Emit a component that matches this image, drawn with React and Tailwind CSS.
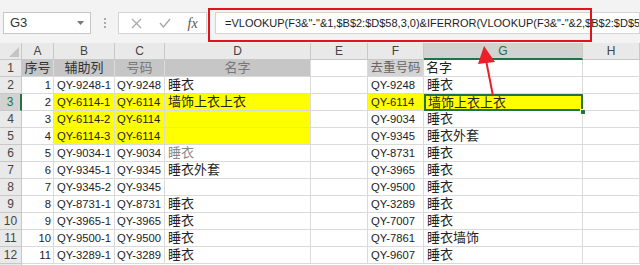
import React from "react";

const cols = [
  { key: "A", w: "w-[32px]" },
  { key: "B", w: "w-[61px]" },
  { key: "C", w: "w-[50px]" },
  { key: "D", w: "w-[146px]" },
  { key: "E", w: "w-[57px]" },
  { key: "F", w: "w-[56px]" },
  { key: "G", w: "w-[159px]" },
  { key: "H", w: "w-[57px]" },
];

const rows = [
  ["1", "QY-9248-1", "QY-9248", "睡衣", "QY-9248", "睡衣"],
  ["2", "QY-6114-1", "QY-6114", "墙饰上衣上衣", "QY-6114", "墙饰上衣上衣"],
  ["3", "QY-6114-2", "QY-6114", "", "QY-9034", "睡衣"],
  ["4", "QY-6114-3", "QY-6114", "", "QY-9345", "睡衣外套"],
  ["5", "QY-9034-1", "QY-9034", "睡衣", "QY-8731", "睡衣"],
  ["6", "QY-9345-1", "QY-9345", "睡衣外套", "QY-3965", "睡衣"],
  ["7", "QY-9345-2", "QY-9345", "", "QY-9500", "睡衣"],
  ["8", "QY-8731-1", "QY-8731", "睡衣", "QY-3289", "睡衣"],
  ["9", "QY-3965-1", "QY-3965", "睡衣", "QY-7007", "睡衣"],
  ["10", "QY-9500-1", "QY-9500", "睡衣", "QY-7861", "睡衣墙饰"],
  ["11", "QY-3289-1", "QY-3289", "睡衣", "QY-9607", "睡衣"],
];

const base = "h-full shrink-0 flex items-center overflow-hidden whitespace-nowrap";
const cell = base + " border-r border-b border-[#dadada]";

function RowHead({ n, active }) {
  return (
    <div
      className={
        "w-[22px] h-full shrink-0 flex items-center justify-center border-b border-[#c8c8c8] text-[12px] " +
        (active
          ? "bg-[#d2d2d2] text-[#217346] border-r-2 border-r-[#217346]"
          : "bg-[#e9e9e9] text-[#444] border-r border-r-[#c8c8c8]")
      }
    >
      {n}
    </div>
  );
}

export default function App() {
  return (
    <div className="relative w-[640px] h-[265px] overflow-hidden bg-white font-['Liberation_Sans','Noto_Sans_CJK_SC',sans-serif] text-[#222]">
      {/* toolbar */}
      <div className="h-[43px] bg-[#f3f3f3] flex items-start pt-[12px] pl-[3px]">
        <div className="w-[88px] h-[22px] bg-white border border-[#c6c6c6] flex items-center justify-between px-[6px] text-[13px] text-[#333]">
          <span>G3</span>
          <svg width="7" height="4" viewBox="0 0 7 4">
            <path d="M0 0 L7 0 L3.5 4 Z" fill="#777" />
          </svg>
        </div>
        <div className="w-[27px] h-[22px] flex flex-col items-center justify-center gap-[2px]">
          <div className="w-[2px] h-[2px] bg-[#aaa]" />
          <div className="w-[2px] h-[2px] bg-[#aaa]" />
          <div className="w-[2px] h-[2px] bg-[#aaa]" />
        </div>
        <div className="w-[89px] h-[22px] bg-white border border-[#d4d4d4] flex items-center justify-around pl-[4px]">
          <svg width="11" height="11" viewBox="0 0 11 11">
            <path d="M1 1 L10 10 M10 1 L1 10" stroke="#a6a6a6" strokeWidth="1.2" />
          </svg>
          <svg width="12" height="10" viewBox="0 0 12 10">
            <path d="M1 5 L4.5 9 L11 1" stroke="#a6a6a6" strokeWidth="1.3" fill="none" />
          </svg>
          <span className="font-['Liberation_Serif',serif] italic text-[14px] text-[#555]">fx</span>
        </div>
        <div className="ml-[8px] flex-1 h-[22px] bg-white border border-[#d4d4d4] flex items-center pl-[9px] text-[11px] text-[#222] whitespace-nowrap overflow-hidden">
          =VLOOKUP(F3&amp;"-"&amp;1,$B$2:$D$58,3,0)&amp;IFERROR(VLOOKUP(F3&amp;"-"&amp;2,$B$2:$D$58
        </div>
      </div>

      {/* column headers */}
      <div className="flex h-[17px] bg-[#e9e9e9] text-[12px] text-[#444]">
        <div className="w-[22px] h-full shrink-0 border-r border-b border-[#c8c8c8] flex items-end justify-end p-[2px]">
          <svg width="10" height="10" viewBox="0 0 10 10">
            <path d="M10 0 L10 10 L0 10 Z" fill="#c4c4c4" />
          </svg>
        </div>
        {cols.map((c) => (
          <div
            key={c.key}
            className={
              c.w +
              " h-full shrink-0 flex items-center justify-center border-r border-[#c8c8c8] " +
              (c.key === "G"
                ? "bg-[#d2d2d2] text-[#217346] border-b-2 border-b-[#217346]"
                : "border-b border-b-[#c8c8c8]")
            }
          >
            {c.key}
          </div>
        ))}
      </div>

      {/* row 1 */}
      <div className="flex h-[17px]">
        <RowHead n="1" />
        <div className={cell + " w-[32px] bg-[#c6c6c6] justify-center text-[13px] text-[#333]"}>序号</div>
        <div className={cell + " w-[61px] bg-[#c6c6c6] justify-center text-[13px] text-[#333]"}>辅助列</div>
        <div className={cell + " w-[50px] bg-[#c6c6c6] justify-center text-[13px] text-[#777]"}>号码</div>
        <div className={cell + " w-[146px] bg-[#c6c6c6] justify-center text-[13px] text-[#777]"}>名字</div>
        <div className={cell + " w-[57px]"} />
        <div className={cell + " w-[56px] bg-[#d4d4d4] justify-center text-[12.5px] text-[#666]"}>去重号码</div>
        <div className={cell + " w-[159px] pl-[2px] text-[13px]"}>名字</div>
        <div className={cell + " w-[57px]"} />
      </div>

      {rows.map((r, i) => {
        const n = i + 2;
        const yl = n >= 3 && n <= 5;
        const sel = n === 3;
        return (
          <div key={n} className="flex h-[17px] text-[11.25px]">
            <RowHead n={String(n)} active={sel} />
            <div className={cell + " w-[32px] justify-end pr-[2px]"}>{r[0]}</div>
            <div className={cell + " w-[61px] pl-[3px] " + (yl ? "bg-[#ffff00]" : "")}>{r[1]}</div>
            <div className={cell + " w-[50px] pl-[2px] " + (yl ? "bg-[#ffff00]" : "")}>{r[2]}</div>
            <div
              className={
                cell +
                " w-[146px] pl-[3px] text-[13px] " +
                (yl ? "bg-[#ffff00] " : "") +
                (n === 6 ? "text-[#888]" : "")
              }
            >
              {r[3]}
            </div>
            <div className={cell + " w-[57px]"} />
            <div className={cell + " w-[56px] pl-[3px] " + (sel ? "bg-[#ffff00]" : "")}>{r[4]}</div>
            {sel ? (
              <div className={base + " w-[159px] text-[13px] bg-[#ffff00] border-2 border-[#217346] pl-[2px]"}>
                {r[5]}
              </div>
            ) : (
              <div className={cell + " w-[159px] text-[13px] pl-[3px]"}>{r[5]}</div>
            )}
            <div className={cell + " w-[57px]"} />
          </div>
        );
      })}
      <div className="flex h-[17px]">
        <RowHead n="" />
      </div>

      {/* fill handle of G3 */}
      <div className="absolute left-[580px] top-[109px] w-[6px] h-[6px] bg-[#217346] border border-white" />

      {/* red annotation box */}
      <div className="absolute left-[208px] top-[8px] w-[384px] h-[34px] border-2 border-[#e3131c]" />

      {/* red arrow */}
      <svg className="absolute left-0 top-0 pointer-events-none" width="640" height="265" viewBox="0 0 640 265">
        <path d="M493 96 L486 60" stroke="#e8202a" strokeWidth="2" />
        <path d="M484 46 L478 64 L495 62 Z" fill="#e8202a" />
      </svg>
    </div>
  );
}
